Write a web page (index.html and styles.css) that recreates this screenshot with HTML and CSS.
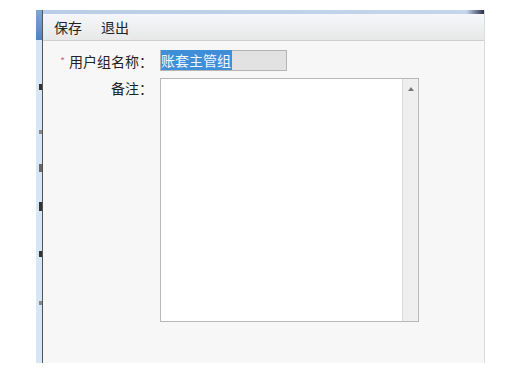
FILE: index.html
```
<!DOCTYPE html>
<html lang="zh-CN">
<head>
  <meta charset="utf-8" />
  <title>用户组</title>
  <link rel="stylesheet" href="styles.css">
</head>
<body>
  <div class="window">
    <div class="side-strip">
      <span class="mark m1"></span>
      <span class="mark m2"></span>
      <span class="mark m3"></span>
      <span class="mark m4"></span>
      <span class="mark m5"></span>
      <span class="mark m6"></span>
    </div>
    <div class="main">
      <div class="title-bar"></div>
      <div class="toolbar">
        <span class="tool">保存</span>
        <span class="tool">退出</span>
      </div>
      <div class="content">
        <div class="form">
          <label class="label"><span class="req">*</span>用户组名称：</label>
          <div class="input"><span class="selected">账套主管组</span></div>
          <label class="label">备注：</label>
          <div class="memo">
            <div class="scrollbar"><span class="arrow-up"></span></div>
          </div>
        </div>
      </div>
    </div>
  </div>
</body>
</html>
```

FILE: styles.css
```
html, body {
  margin: 0;
  padding: 0;
  background: #fff;
  font-family: "Noto Sans CJK SC", "Noto Sans", sans-serif;
  color: #222;
}
.window {
  display: flex;
  margin: 10px 0 0 36px;
  width: 449px;
  height: 353px;
}
.side-strip {
  width: 6px;
  background: linear-gradient(#7fa6d6 0, #4f82c2 30px, #d6e6f4 30px);
  border-right: 1px solid #555;
  display: flex;
  flex-direction: column;
  align-items: flex-end;
}
.mark {
  display: block;
  width: 3px;
  background: #333;
}
.m1 { height: 6px; margin-top: 74px; }
.m2 { height: 4px; margin-top: 40px; background: #888; }
.m3 { height: 8px; margin-top: 30px; background: #666; }
.m4 { height: 9px; margin-top: 30px; }
.m5 { height: 6px; margin-top: 40px; }
.m6 { height: 4px; margin-top: 44px; background: #888; }
.main {
  flex: 1;
  display: flex;
  flex-direction: column;
  border-right: 1px solid #dcdcdc;
}
.title-bar {
  height: 4px;
  background: linear-gradient(90deg, #b9cde6, #c5d6ec 96%, #2b2f4a);
}
.toolbar {
  height: 26px;
  display: flex;
  align-items: center;
  gap: 19px;
  padding-left: 11px;
  background: linear-gradient(#f5f7fa, #e8e8e8);
  border-bottom: 1px solid #cfcfcf;
  font-size: 14px;
}
.content {
  flex: 1;
  background: #f7f7f7;
  padding-top: 9px;
}
.form {
  display: grid;
  grid-template-columns: 110px 259px;
  column-gap: 7px;
  row-gap: 6px;
  align-items: start;
}
.label {
  text-align: right;
  font-size: 14px;
  line-height: 21px;
}
.req {
  color: #d06080;
  font-size: 10px;
  margin-right: 4px;
  vertical-align: 2px;
}
.input {
  width: 125px;
  height: 19px;
  border: 1px solid #b4b4b4;
  background: #e2e2e2;
  font-size: 14px;
  line-height: 19px;
}
.selected {
  background: #3f8ed8;
  color: #f4f8ff;
  padding-right: 1px;
}
.memo {
  height: 242px;
  border: 1px solid #b8b8b8;
  background: #fff;
  display: flex;
  justify-content: flex-end;
}
.scrollbar {
  width: 15px;
  background: #efefef;
  border-left: 1px solid #dadada;
  display: flex;
  justify-content: center;
  padding-top: 8px;
}
.arrow-up {
  width: 0;
  height: 0;
  border-left: 3px solid transparent;
  border-right: 3px solid transparent;
  border-bottom: 4px solid #777;
}
```
